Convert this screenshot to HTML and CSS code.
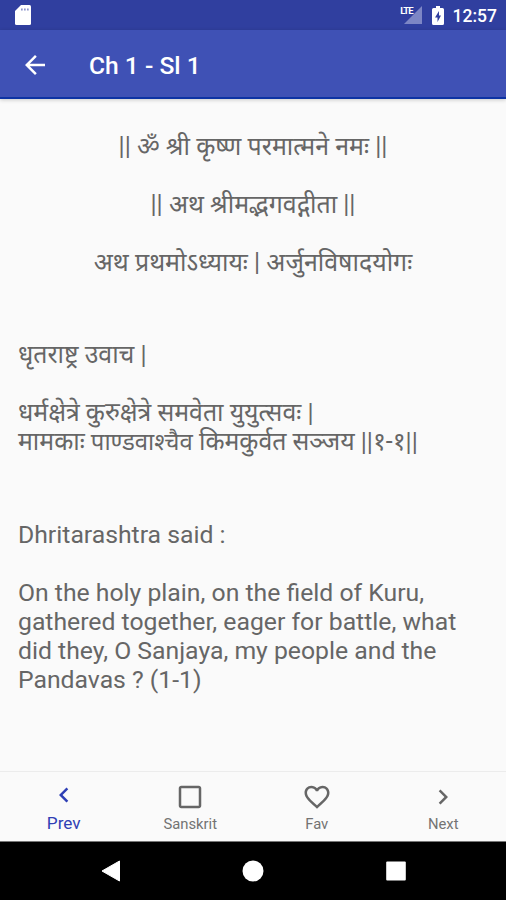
FILE: index.html
```html
<!DOCTYPE html>
<html lang="en">
<head>
    <meta charset="UTF-8">
    <meta name="viewport" content="width=device-width, initial-scale=1.0">
    <title>Ch 1 - Sl 1</title>
    <link rel="stylesheet" href="styles.css">
</head>
<body>
    <div class="status-bar">
        <svg class="sd-icon" viewBox="0 0 16 20">
            <path d="M6 0h8.500a1.500 1.500 0 0 1 1.500 1.500v17a1.500 1.500 0 0 1-1.500 1.500h-13A1.500 1.500 0 0 1 0 18.500V6z" fill="#fff"/>
            <path d="M6 3.500h1.700v2H6zM9 3.500h1.700v2H9zM12 3.500h1.700v2H12z" fill="#8d95cc"/>
        </svg>
        <div class="status-right">
            <span class="lte">LTE</span>
            <svg class="signal-icon" viewBox="0 0 18 18"><path d="M18 0v18H0z" fill="#7d86c5"/></svg>
            <svg class="battery-icon" viewBox="0 0 12 19">
                <path d="M4 0h4v2h2.500A1.500 1.500 0 0 1 12 3.500v14a1.500 1.500 0 0 1-1.500 1.500h-9A1.500 1.500 0 0 1 0 17.500v-14A1.500 1.500 0 0 1 1.500 2H4z" fill="#fff"/>
                <path d="M7 5L3 11.500h2.500V16L9 9.500H7z" fill="#303f9f"/>
            </svg>
            <span class="time">12:57</span>
        </div>
    </div>

    <header class="app-bar">
        <svg class="back-icon" viewBox="4 4 16 16"><path d="M20 11H7.830l5.590-5.590L12 4l-8 8 8 8 1.410-1.410L7.830 13H20v-2z" fill="#fff"/></svg>
        <h1 class="title">Ch 1 - Sl 1</h1>
    </header>

    <main class="content">
        <div class="intro">
            <p>|| ॐ श्री कृष्ण परमात्मने नमः ||</p>
            <p>|| अथ श्रीमद्भगवद्गीता ||</p>
            <p>अथ प्रथमोऽध्यायः | अर्जुनविषादयोगः</p>
        </div>
        <div class="sloka">
            <p>धृतराष्ट्र उवाच |</p>
            <p>धर्मक्षेत्रे कुरुक्षेत्रे समवेता युयुत्सवः |<br>मामकाः <span class="tight" lang="hi">पाण्डवाश्चैव</span> किमकुर्वत सञ्जय ||१-१||</p>
        </div>
        <div class="meaning">
            <p>Dhritarashtra said :</p>
            <p>On the holy plain, on the field of Kuru,<br>gathered together, eager for battle, what<br>did they, O Sanjaya, my people and the<br>Pandavas ? (1-1)</p>
        </div>
    </main>

    <nav class="tabs">
        <a class="tab active">
            <svg viewBox="0 0 24 24"><path d="M15.410 7.410L14 6l-6 6 6 6 1.410-1.410L10.830 12z"/></svg>
            <span>Prev</span>
        </a>
        <a class="tab">
            <svg viewBox="0 0 24 24"><path d="M19 5v14H5V5h14m0-2H5c-1.100 0-2 .9-2 2v14c0 1.100.9 2 2 2h14c1.100 0 2-.9 2-2V5c0-1.100-.9-2-2-2z"/></svg>
            <span>Sanskrit</span>
        </a>
        <a class="tab">
            <svg viewBox="0 0 24 24"><path d="M16.500 3c-1.740 0-3.410.810-4.500 2.090C10.910 3.810 9.240 3 7.500 3 4.420 3 2 5.420 2 8.500c0 3.780 3.400 6.860 8.550 11.540L12 21.350l1.450-1.320C18.600 15.360 22 12.280 22 8.500 22 5.420 19.580 3 16.500 3zm-4.400 15.550l-.1.100-.1-.1C7.140 14.240 4 11.390 4 8.500 4 6.500 5.500 5 7.500 5c1.540 0 3.040.990 3.570 2.360h1.870C13.460 5.990 14.960 5 16.500 5c2 0 3.500 1.500 3.500 3.500 0 2.890-3.140 5.740-7.900 10.050z"/></svg>
            <span>Fav</span>
        </a>
        <a class="tab">
            <svg viewBox="0 0 24 24"><path d="M10 6L8.590 7.410 13.170 12l-4.580 4.590L10 18l6-6z"/></svg>
            <span>Next</span>
        </a>
    </nav>

    <div class="system-nav">
        <svg viewBox="0 0 22 22"><path d="M19.500 1v20L2 11z" stroke="#fff" stroke-linejoin="round"/></svg>
        <svg viewBox="0 0 22 22"><circle cx="11" cy="11" r="10.500"/></svg>
        <svg viewBox="0 0 22 22"><rect x="1.200" y="1.500" width="19.600" height="19" rx="1"/></svg>
    </div>
</body>
</html>
```

FILE: styles.css
```css
* {
    box-sizing: border-box;
}

body {
    margin: 0;
    height: 900px;
    display: flex;
    flex-direction: column;
    overflow: hidden;
    font-family: Roboto, "Noto Sans", sans-serif;
    background-color: #fafafa;
    color: #666;
}

p, h1 {
    margin: 0;
}

svg {
    display: block;
}

.status-bar {
    height: 30px;
    padding: 0 9px 0 15px;
    display: flex;
    align-items: center;
    justify-content: space-between;
    background-color: #303f9f;
    color: #fff;
}

.sd-icon {
    width: 16px;
    height: 20px;
}

.status-right {
    display: flex;
    align-items: center;
}

.lte {
    font-size: 9.5px;
    font-weight: 700;
    line-height: 10px;
    letter-spacing: -1px;
    margin: 0 -9px 9px 0;
}

.signal-icon {
    width: 18px;
    height: 18px;
}

.battery-icon {
    width: 12px;
    height: 19px;
    margin: 0 9px 0 10px;
}

.time {
    font-size: 17.5px;
    font-weight: 500;
    line-height: 30px;
    padding-top: 2px;
}

.app-bar {
    height: 69px;
    padding: 2px 0 0 25px;
    display: flex;
    align-items: center;
    background-color: #3f51b5;
    border-bottom: 2px solid #0d33a4;
    box-shadow: 0 1px 4px rgba(0, 0, 0, 0.2);
    color: #fff;
}

.back-icon {
    width: 20px;
    height: 20px;
    margin-right: 44px;
}

.title {
    font-size: 24.6px;
    font-weight: 500;
    line-height: 30px;
    padding-top: 2px;
}

.content {
    flex: 1;
    padding: 33px 18px 0;
    font-size: 24.75px;
    line-height: 29px;
    white-space: nowrap;
}

.content p + p {
    margin-top: 29px;
}

.intro {
    font-size: 24.95px;
    text-align: center;
}

.sloka {
    margin: 63px 0 64px;
    font-size: 24.85px;
}

.tight {
    font-size: 23.9px;
    line-height: 1;
}

.tabs {
    height: 71px;
    display: flex;
    border-top: 1px solid #ececec;
    border-bottom: 1px solid #777;
}

.tab {
    flex: 1;
    display: flex;
    flex-direction: column;
    align-items: center;
    padding: 10px 0 0 1px;
    color: #737373;
    font-size: 14.8px;
    line-height: 18px;
}

.tab svg {
    width: 30px;
    height: 30px;
    margin-bottom: 3px;
    fill: #666;
}

.tab.active {
    padding-top: 8px;
    color: #303fb5;
    font-size: 17.2px;
}

.tab.active svg {
    margin-bottom: 4px;
    fill: #2e3fb5;
}

.system-nav {
    height: 58px;
    padding: 0 39px 0 40px;
    display: flex;
    justify-content: space-around;
    align-items: center;
    background-color: #000;
}

.system-nav svg {
    width: 22px;
    height: 22px;
    fill: #fff;
}
```
